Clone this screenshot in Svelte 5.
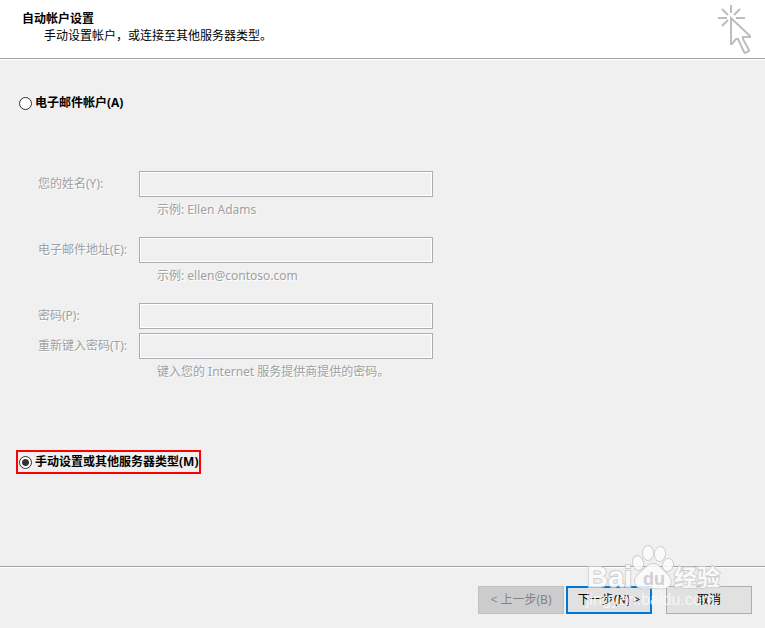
<script lang="ts">
	let mode = $state('manual');
	let values = $state<Record<string, string>>({ name: '', email: '', password: '', confirm: '' });

	const fields = [
		{ id: 'name', label: '您的姓名(Y):', type: 'text', hint: '示例: Ellen Adams' },
		{ id: 'email', label: '电子邮件地址(E):', type: 'email', hint: '示例: ellen@contoso.com' },
		{ id: 'password', label: '密码(P):', type: 'password', hint: '' },
		{
			id: 'confirm',
			label: '重新键入密码(T):',
			type: 'password',
			hint: '键入您的 Internet 服务提供商提供的密码。'
		}
	];
</script>

<div class="wizard">
	<header>
		<div>
			<h1>自动帐户设置</h1>
			<p>手动设置帐户，或连接至其他服务器类型。</p>
		</div>
		<svg class="cursor" width="34" height="50" viewBox="0 0 34 50" aria-hidden="true">
			<g fill="none" stroke="#bdbdbd" stroke-width="2">
				<path d="M13 0v8M0 13h9M18 13h9M4 4l6 6M22 4l-6 6M4 21l6-6" />
				<path d="M13 13v26h1l4-5h2l6 13 1 1 4-2v-1l-6-11v-2h7v-1z" />
			</g>
		</svg>
	</header>

	<main>
		<label class="option">
			<input type="radio" name="mode" value="email" bind:group={mode} />
			<span>电子邮件帐户(A)</span>
		</label>

		<div class="fields">
			{#each fields as field}
				<div class="row">
					<label for={field.id}>{field.label}</label>
					<input
						id={field.id}
						type={field.type}
						bind:value={values[field.id]}
						disabled={mode !== 'email'}
					/>
				</div>
				{#if field.hint}
					<p class="hint">{field.hint}</p>
				{/if}
			{/each}
		</div>

		<label class="option marked">
			<input type="radio" name="mode" value="manual" bind:group={mode} />
			<span>手动设置或其他服务器类型(M)</span>
		</label>
	</main>

	<footer>
		<button disabled>&lt; 上一步(B)</button>
		<button class="next">下一步(N) &gt;</button>
		<button class="cancel">取消</button>

		<svg class="watermark" width="150" height="70" viewBox="0 0 150 70" aria-hidden="true">
			<g class="paw">
				<ellipse cx="58" cy="23" rx="5" ry="7" transform="rotate(-12 58 23)" />
				<ellipse cx="68" cy="13" rx="5" ry="7" />
				<ellipse cx="80" cy="14" rx="5" ry="7" transform="rotate(8 80 14)" />
				<ellipse cx="88" cy="25" rx="5" ry="6" transform="rotate(20 88 25)" />
				<path d="M73 24c-6 0-9 6-13 9-5 4-6 8-4 12 3 5 10 3 17 3s14 2 17-3c2-4 0-8-4-12-4-3-7-9-13-9z" />
			</g>
			<g class="brand">
				<text x="7" y="47" font-size="29">Bai</text>
				<text x="94" y="46" font-size="23">经验</text>
			</g>
			<text class="du" x="63" y="45" font-size="18">du</text>
			<text class="site" x="6" y="65" font-size="16">jingyan.baidu.com</text>
		</svg>
	</footer>
</div>

<style>
	:global(body) {
		margin: 0;
		background: #f0f0f0;
	}

	.wizard {
		display: flex;
		flex-direction: column;
		min-height: 100vh;
		color: #000;
		font: 12px/16px 'Noto Sans', 'Noto Sans CJK SC', sans-serif;
	}

	h1,
	p {
		margin: 0;
		font-size: 12px;
	}

	header {
		display: flex;
		justify-content: space-between;
		box-sizing: border-box;
		height: 59px;
		padding: 5px 13px 0 22px;
		background: #fff;
		border-bottom: 1px solid #a0a0a0;
	}

	header h1 {
		margin-top: 6px;
	}

	header p {
		padding-left: 22px;
		line-height: 18px;
	}

	.cursor {
		flex: none;
	}

	main {
		flex: 1;
		padding: 31px 16px 0;
		border-top: 1px solid #fff;
	}

	.option {
		display: flex;
		align-items: center;
		gap: 3px;
		width: fit-content;
		padding: 0 1px;
		border: 2px solid transparent;
		font-weight: bold;
		line-height: 20px;
	}

	.marked {
		border-color: #f00;
	}

	.option input {
		appearance: none;
		flex: none;
		box-sizing: border-box;
		width: 13px;
		height: 13px;
		margin: 0;
		border: 1px solid #333;
		border-radius: 50%;
		background: #fff;
	}

	.option input:checked {
		background: radial-gradient(circle, #333 3px, #fff 4px);
	}

	.fields {
		padding: 52px 0 55px 22px;
		color: #a0a0a0;
		text-shadow: 1px 1px 0 #fff;
	}

	.row {
		display: flex;
		align-items: center;
		margin-top: 4px;
	}

	.row label {
		width: 101px;
	}

	.row input {
		box-sizing: border-box;
		width: 294px;
		height: 26px;
		padding: 0 4px;
		border: 1px solid #abadb3;
		background: #fff;
		font: inherit;
	}

	.row input:disabled {
		background: #f0f0f0;
		box-shadow: inset 0 0 0 1px #fff;
	}

	.hint {
		padding: 5px 0 15px 119px;
	}

	footer {
		position: relative;
		display: flex;
		justify-content: flex-end;
		gap: 2px;
		box-sizing: border-box;
		height: 62px;
		padding: 19px 13px 0;
		border-top: 1px solid #a0a0a0;
		box-shadow: inset 0 1px 0 #fff;
	}

	button {
		box-sizing: border-box;
		width: 86px;
		height: 28px;
		padding: 0;
		border: 1px solid #adadad;
		background: #e1e1e1;
		color: #000;
		font: inherit;
	}

	button:disabled {
		border-color: #bfbfbf;
		background: #ccc;
		color: #838383;
	}

	.next {
		border: 2px solid #0078d7;
	}

	.cancel {
		margin-left: 12px;
	}

	/* translucent brand mark lying over the buttons */
	.watermark {
		position: absolute;
		right: 35px;
		bottom: 18px;
		opacity: 0.85;
		pointer-events: none;
	}

	.watermark text {
		font-family: 'Liberation Sans', 'Noto Sans CJK SC', sans-serif;
	}

	.paw,
	.brand text {
		fill: #fcfcfc;
		stroke: #cacaca;
		stroke-width: 2px;
		paint-order: stroke;
	}

	.brand text {
		font-weight: bold;
	}

	.watermark .du {
		fill: #cacaca;
		font-weight: bold;
	}

	.watermark .site {
		fill: #fafafa;
	}
</style>
